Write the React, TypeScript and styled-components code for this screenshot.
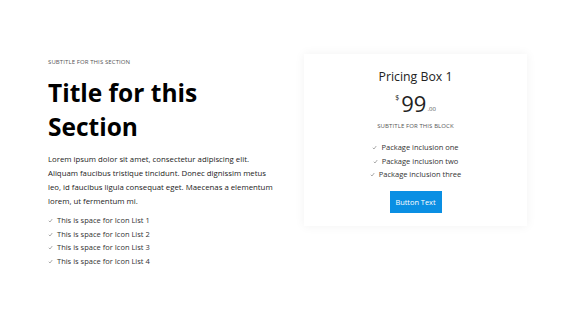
import React from 'react';
import styled, { createGlobalStyle } from 'styled-components';

const GlobalStyle = createGlobalStyle`
    html, body {
        margin: 0;
        padding: 0;
        background: #ffffff;
    }
    body {
        font-family: 'Open Sans', 'Noto Sans', sans-serif;
        color: #222;
    }
`;

const Page = styled.div`
    width: 569px;
    height: 329px;
    box-sizing: border-box;
    padding: 54px 42px 0 48px;
    display: flex;
    align-items: flex-start;
    justify-content: space-between;
`;

const LeftCol = styled.div`
    width: 232px;
    padding-top: 4px;
    display: flex;
    flex-direction: column;
`;

const Eyebrow = styled.div`
    font-size: 6px;
    line-height: 8px;
    letter-spacing: 0.1px;
    color: #555;
    text-transform: uppercase;
`;

const Title = styled.h1`
    margin: 10px 0 0;
    font-size: 24.5px;
    line-height: 34px;
    font-weight: 700;
    color: #000;
`;

const Paragraph = styled.p`
    margin: 8px 0 0;
    font-size: 7.8px;
    line-height: 14px;
    color: #222;
`;

const List = styled.ul<{ $center?: boolean }>`
    list-style: none;
    margin: ${(p) => (p.$center ? '11px 0 0' : '6px 0 0')};
    padding: 0;
    display: flex;
    flex-direction: column;
    align-items: ${(p) => (p.$center ? 'center' : 'flex-start')};
`;

const Item = styled.li`
    display: flex;
    align-items: center;
    gap: 4px;
    font-size: 7.5px;
    line-height: 13.6px;
    color: #333;
`;

const Check = () => (
    <svg width="5" height="5" viewBox="0 0 10 10">
        <polyline points="1.5,5.5 4,8 8.5,2" fill="none" stroke="#777" strokeWidth="1.2" />
    </svg>
);

const Card = styled.div`
    width: 223px;
    height: 172px;
    box-sizing: border-box;
    padding-top: 14px;
    background: #fff;
    box-shadow: 0 0 10px rgba(0, 0, 0, 0.06);
    display: flex;
    flex-direction: column;
    align-items: center;
`;

const CardTitle = styled.div`
    font-size: 12.3px;
    line-height: 18px;
    font-weight: 500;
    color: #222;
`;

const Price = styled.div`
    margin-top: 4px;
    display: flex;
    align-items: flex-start;
    color: #222;
`;

const Currency = styled.span`
    font-size: 7px;
    line-height: 10px;
    margin-top: 3px;
    margin-right: 2px;
`;

const Amount = styled.span`
    font-size: 22px;
    line-height: 26px;
`;

const Cents = styled.span`
    font-size: 6px;
    line-height: 8px;
    align-self: flex-end;
    margin-bottom: 3px;
    margin-left: 1px;
    color: #555;
`;

const BlockSubtitle = styled(Eyebrow)`
    margin-top: 6px;
`;

const Button = styled.button`
    margin-top: 9px;
    width: 52px;
    height: 22px;
    padding: 0;
    border: none;
    background: #0a8fe3;
    color: #fff;
    font-family: inherit;
    font-size: 7.4px;
    cursor: pointer;
`;

const iconList = ['This is space for Icon List 1', 'This is space for Icon List 2', 'This is space for Icon List 3', 'This is space for Icon List 4'];
const inclusions = ['Package inclusion one', 'Package inclusion two', 'Package inclusion three'];

function App() {
    return (
        <>
            <GlobalStyle />
            <Page>
                <LeftCol>
                    <Eyebrow>Subtitle for this section</Eyebrow>
                    <Title>
                        Title for this
                        <br />
                        Section
                    </Title>
                    <Paragraph>
                        Lorem ipsum dolor sit amet, consectetur adipiscing elit. Aliquam faucibus tristique tincidunt. Donec dignissim metus leo, id faucibus ligula consequat eget. Maecenas a elementum lorem, ut fermentum mi.
                    </Paragraph>
                    <List>
                        {iconList.map((t) => (
                            <Item key={t}>
                                <Check />
                                {t}
                            </Item>
                        ))}
                    </List>
                </LeftCol>
                <Card>
                    <CardTitle>Pricing Box 1</CardTitle>
                    <Price>
                        <Currency>$</Currency>
                        <Amount>99</Amount>
                        <Cents>.00</Cents>
                    </Price>
                    <BlockSubtitle>Subtitle for this block</BlockSubtitle>
                    <List $center>
                        {inclusions.map((t) => (
                            <Item key={t}>
                                <Check />
                                {t}
                            </Item>
                        ))}
                    </List>
                    <Button>Button Text</Button>
                </Card>
            </Page>
        </>
    );
}

export default App;
